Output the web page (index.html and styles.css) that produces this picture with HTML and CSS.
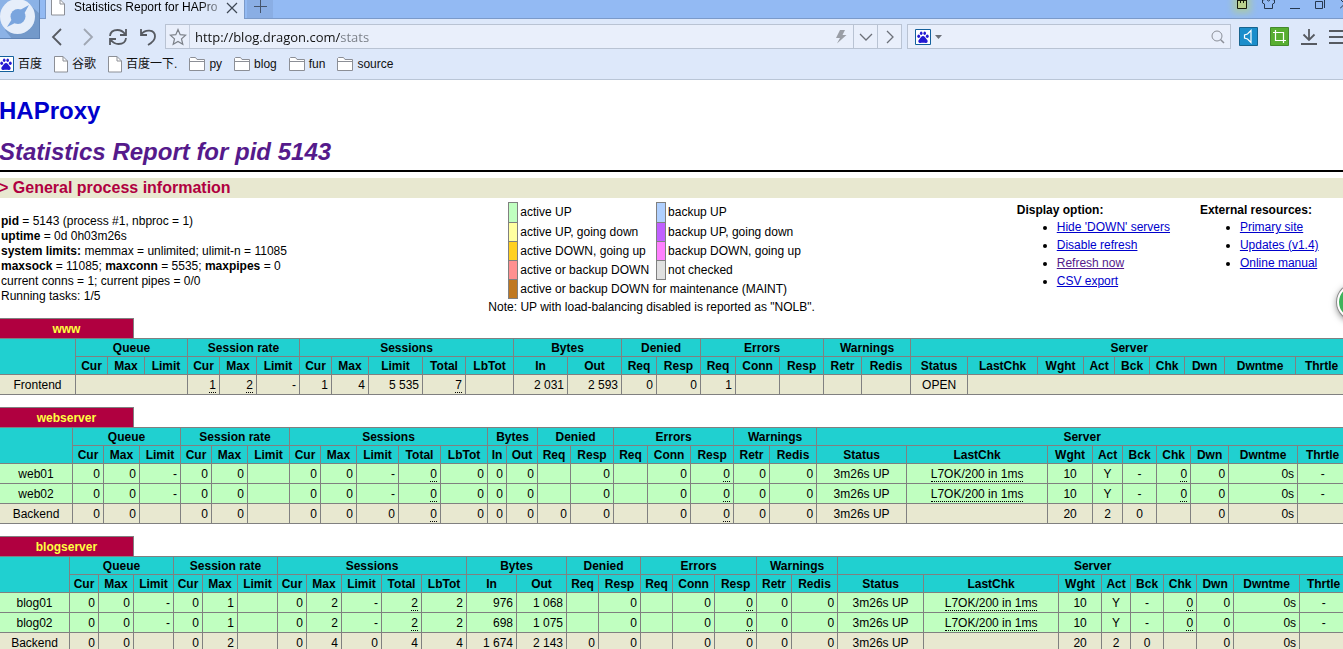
FILE: index.html
```html
<!DOCTYPE html>
<html lang="en">
<head>
<meta charset="utf-8">
<title>Statistics Report for HAProxy</title>
<link rel="stylesheet" href="styles.css">
</head>
<body>
<svg class="defs" aria-hidden="true">
  <symbol id="page" viewBox="0 0 14 17"><path d="M.5.5H9L13.5 5V16H.5Z" fill="#fff" stroke="#8c8f96"/><path d="M9 .5V5h4.5" fill="none" stroke="#8c8f96"/></symbol>
  <symbol id="folder" viewBox="0 0 16 14"><path d="M.5 13.500V1.500L1.500.5H6.500L8 2.500H15.500V13.500Z" fill="#fff" stroke="#8c8f96"/><path d="M1 4.500H15" stroke="#8c8f96"/></symbol>
  <symbol id="paw" viewBox="0 0 16 16"><path d="M.5.5h15v15H.5z" fill="#fff" stroke="#13609c"/><g fill="#2419d2"><ellipse cx="3.700" cy="7.200" rx="1.400" ry="1.800"/><ellipse cx="6.200" cy="4.300" rx="1.300" ry="1.800"/><ellipse cx="9.700" cy="4.300" rx="1.300" ry="1.800"/><ellipse cx="12.300" cy="7.200" rx="1.400" ry="1.800"/><path d="M8 7c1.600 0 2.200 1.700 3.200 2.700 1.300 1.300 1.800 2 1.300 3.200-.7 1.600-2.500.8-4.500.8s-3.800.8-4.500-.8c-.5-1.200 0-1.900 1.300-3.200C5.800 8.700 6.400 7 8 7z"/></g></symbol>
</svg>
<div class="window">
  <header class="browser">
    <button class="logo" aria-label="Browser menu"><svg width="40" height="39" viewBox="0 0 40 39"><path d="M0 0H40V39H0Z" fill="#8bb2e6"/><path d="M31 6L40 14V39H12L5 30Z" fill="#7399ca"/><circle cx="17.500" cy="16.500" r="17.500" fill="#e6eefa"/><circle cx="18" cy="16.500" r="7.500" fill="#7aa5de"/><path d="M7 27L12 19L15 23ZM29 5L24 14L20 10Z" fill="#7aa5de"/><path d="M0 38.500H39.500V0" fill="none" stroke="#5f83b5"/></svg></button>
    <div class="titlebar">
      <div class="tab"><svg width="14" height="17"><use href="#page"/></svg><span class="tab-title">Statistics Report for HAPro</span><button aria-label="Close tab"><svg width="12" height="12" viewBox="0 0 12 12"><path d="M1 1L11 11M11 1L1 11" stroke="#3e4754" stroke-width="1.200"/></svg></button></div>
      <button class="new-tab" aria-label="New tab"><svg width="13" height="13" viewBox="0 0 13 13"><path d="M6.500 0V13M0 6.500H13" stroke="#45546b"/></svg></button>
      <div class="window-buttons">
        <button class="glow" aria-label="Notes"><svg width="10" height="10" viewBox="0 0 10 10"><path d="M.5 0V9.500H9.500V0M0 1.500H10M3.500 1V4M6.500 1V4" fill="none" stroke="#15180c"/></svg></button>
        <button aria-label="Skins"><svg width="13" height="10" viewBox="0 0 13 10"><path d="M2.500 9.500V5L.5 4V1L3 .5L4.500 0Q6.500 4 8.500 0L10 .5L12.500 1V4L10.500 5V9.500Z" fill="none" stroke="#26384f"/></svg></button>
        <button aria-label="Minimize"><svg width="10" height="10" viewBox="0 0 10 10"><path d="M0 9.500H10" stroke="#26384f"/></svg></button>
        <button aria-label="Restore"><svg width="10" height="10" viewBox="0 0 10 10"><path d="M.5 2.500H7.500V9.500H.5ZM2 .5H9.500V9" fill="none" stroke="#26384f"/></svg></button>
        <button aria-label="Close"><svg width="10" height="10" viewBox="0 0 10 10"><path d="M0 9.500L9.500 0M0 0L9.500 9.500" stroke="#26384f"/></svg></button>
      </div>
    </div>
    <nav class="toolbar">
      <div class="nav-buttons">
        <button aria-label="Back"><svg width="20" height="20" viewBox="0 0 20 20"><path d="M13 2L5 10L13 18" fill="none" stroke="#565a61" stroke-width="1.800"/></svg></button>
        <button aria-label="Forward"><svg width="20" height="20" viewBox="0 0 20 20"><path d="M6 2L14 10L6 18" fill="none" stroke="#a0a7b3" stroke-width="1.800"/></svg></button>
        <button aria-label="Reload"><svg width="20" height="20" viewBox="0 0 20 20"><path d="M2 9Q2.500 3 9.500 3Q14 3 17 7M18 2V8H12M18 11Q17.500 17 10.500 17Q6 17 3 13M2 18V12H8" fill="none" stroke="#565a61" stroke-width="1.800"/></svg></button>
        <button aria-label="Undo"><svg width="20" height="20" viewBox="0 0 20 20"><path d="M3 2V8H9M3 7.500C7 2 17 2 17 9.500Q17 14 10 18" fill="none" stroke="#565a61" stroke-width="1.800"/></svg></button>
      </div>
      <div class="address">
        <button class="star" aria-label="Bookmark"><svg width="18" height="18" viewBox="0 0 18 18"><path d="M9 1.500L11.200 6.700L16.700 7.200L12.500 10.900L13.800 16.300L9 13.400L4.200 16.300L5.500 10.900L1.300 7.200L6.800 6.700Z" fill="none" stroke="#7b8088" stroke-width="1.200"/></svg></button>
        <input class="url" type="text" aria-label="Address" value="http://blog.dragon.com/stats">
        <button class="bolt" aria-label="Speed mode"><svg width="12" height="14" viewBox="0 0 12 14"><path d="M5 0H10L7.500 5H11.500L2 13.500L5 8H1Z" fill="#9a9ea6"/></svg></button>
        <button class="cell" aria-label="History"><svg width="14" height="10" viewBox="0 0 14 10"><path d="M1 2L7 8L13 2" fill="none" stroke="#6c7078" stroke-width="1.300"/></svg></button>
        <button class="cell" aria-label="Go"><svg width="10" height="14" viewBox="0 0 10 14"><path d="M2 1L8 7L2 13" fill="none" stroke="#6c7078" stroke-width="1.300"/></svg></button>
      </div>
      <div class="search">
        <button aria-label="Search engine"><svg width="16" height="16"><use href="#paw"/></svg><svg width="7" height="4" viewBox="0 0 7 4"><path d="M0 0H7L3.500 4Z" fill="#6c7078"/></svg></button>
        <input type="search" aria-label="Search">
        <button aria-label="Search"><svg width="14" height="14" viewBox="0 0 14 14"><circle cx="6" cy="6" r="5" fill="none" stroke="#8b8f98"/><path d="M9.500 9.500L13 13" stroke="#8b8f98" stroke-width="1.500"/></svg></button>
      </div>
      <div class="tools">
        <button aria-label="Sound"><svg width="19" height="19" viewBox="0 0 19 19"><path d="M.5.5h18v18H.5z" fill="#1b8ecb" stroke="#17648f"/><path d="M12 3.500V15.500L8.500 12L5.500 11V8L8.500 7Z" fill="none" stroke="#fff" stroke-width="1.200"/></svg></button>
        <button aria-label="Capture"><svg width="19" height="19" viewBox="0 0 19 19"><path d="M.5.5h18v18H.5z" fill="#58ae31" stroke="#438a2b"/><path d="M5.500 3V13.500H16M3 5.500H13.500V16" fill="none" stroke="#fff" stroke-width="1.200"/></svg></button>
        <button aria-label="Downloads"><svg width="16" height="16" viewBox="0 0 16 16"><path d="M8 0V11M2.500 5.500L8 11L13.500 5.500M0 15H16" fill="none" stroke="#565a61" stroke-width="1.800"/></svg></button>
        <button aria-label="Menu"><svg width="16" height="16" viewBox="0 0 16 16"><path d="M0 2H16M0 8H16M0 14H16" stroke="#565a61" stroke-width="1.800"/></svg></button>
      </div>
    </nav>
    <nav class="bookmarks">
      <a href="#"><svg width="16" height="16"><use href="#paw"/></svg>百度</a>
      <a href="#"><svg width="14" height="17"><use href="#page"/></svg>谷歌</a>
      <a href="#"><svg width="14" height="17"><use href="#page"/></svg>百度一下.</a>
      <a href="#"><svg width="16" height="14"><use href="#folder"/></svg>py</a>
      <a href="#"><svg width="16" height="14"><use href="#folder"/></svg>blog</a>
      <a href="#"><svg width="16" height="14"><use href="#folder"/></svg>fun</a>
      <a href="#"><svg width="16" height="14"><use href="#folder"/></svg>source</a>
    </nav>
  </header>
  <main class="viewport">
    <div class="report">
      <h1><a href="#">HAProxy</a></h1>
      <h2><a href="#">Statistics Report for pid 5143</a></h2>
      <hr>
      <h3>&gt; General process information</h3>
      <section class="info">
        <p class="process"><b>pid</b> = 5143 (process #1, nbproc = 1)<br>
          <b>uptime</b> = 0d 0h03m26s<br>
          <b>system limits:</b> memmax = unlimited; ulimit-n = 11085<br>
          <b>maxsock</b> = 11085; <b>maxconn</b> = 5535; <b>maxpipes</b> = 0<br>
          current conns = 1; current pipes = 0/0<br>
          Running tasks: 1/5</p>
        <div class="legend">
          <table>
            <tr><td class="key up"></td><td>active UP</td><td class="key backup-up"></td><td>backup UP</td></tr>
            <tr><td class="key going-down"></td><td>active UP, going down</td><td class="key backup-going-down"></td><td>backup UP, going down</td></tr>
            <tr><td class="key going-up"></td><td>active DOWN, going up</td><td class="key backup-going-up"></td><td>backup DOWN, going up</td></tr>
            <tr><td class="key down"></td><td>active or backup DOWN</td><td class="key unchecked"></td><td>not checked</td></tr>
            <tr><td class="key maint"></td><td colspan="3">active or backup DOWN for maintenance (MAINT)</td></tr>
          </table>
          <p>Note: UP with load-balancing disabled is reported as "NOLB".</p>
        </div>
        <div class="links"><b>Display option:</b>
          <ul><li><a href="#">Hide 'DOWN' servers</a></li><li><a href="#">Disable refresh</a></li><li><a class="visited" href="#">Refresh now</a></li><li><a href="#">CSV export</a></li></ul>
        </div>
        <div class="links"><b>External resources:</b>
          <ul><li><a href="#">Primary site</a></li><li><a href="#">Updates (v1.4)</a></li><li><a href="#">Online manual</a></li></ul>
        </div>
      </section>

      <section class="proxy www">
        <h4>www</h4>
        <table>
          <colgroup><col><col><col><col><col><col><col><col><col><col><col><col><col><col><col><col><col><col><col><col><col><col><col><col><col><col><col><col><col><col></colgroup>
          <thead>
            <tr><th rowspan="2"></th><th colspan="3">Queue</th><th colspan="3">Session rate</th><th colspan="5">Sessions</th><th colspan="2">Bytes</th><th colspan="2">Denied</th><th colspan="3">Errors</th><th colspan="2">Warnings</th><th colspan="9">Server</th></tr>
            <tr><th>Cur</th><th>Max</th><th>Limit</th><th>Cur</th><th>Max</th><th>Limit</th><th>Cur</th><th>Max</th><th>Limit</th><th>Total</th><th>LbTot</th><th>In</th><th>Out</th><th>Req</th><th>Resp</th><th>Req</th><th>Conn</th><th>Resp</th><th>Retr</th><th>Redis</th><th>Status</th><th>LastChk</th><th>Wght</th><th>Act</th><th>Bck</th><th>Chk</th><th>Dwn</th><th>Dwntme</th><th>Thrtle</th></tr>
          </thead>
          <tbody>
            <tr class="total"><td class="mid">Frontend</td><td colspan="3"></td><td><u>1</u></td><td><u>2</u></td><td>-</td><td>1</td><td>4</td><td>5 535</td><td><u>7</u></td><td></td><td>2 031</td><td>2 593</td><td>0</td><td>0</td><td>1</td><td></td><td></td><td></td><td></td><td class="mid">OPEN</td><td colspan="8"></td></tr>
          </tbody>
        </table>
      </section>

      <section class="proxy webserver">
        <h4>webserver</h4>
        <table>
          <colgroup><col><col><col><col><col><col><col><col><col><col><col><col><col><col><col><col><col><col><col><col><col><col><col><col><col><col><col><col><col><col></colgroup>
          <thead>
            <tr><th rowspan="2"></th><th colspan="3">Queue</th><th colspan="3">Session rate</th><th colspan="5">Sessions</th><th colspan="2">Bytes</th><th colspan="2">Denied</th><th colspan="3">Errors</th><th colspan="2">Warnings</th><th colspan="9">Server</th></tr>
            <tr><th>Cur</th><th>Max</th><th>Limit</th><th>Cur</th><th>Max</th><th>Limit</th><th>Cur</th><th>Max</th><th>Limit</th><th>Total</th><th>LbTot</th><th>In</th><th>Out</th><th>Req</th><th>Resp</th><th>Req</th><th>Conn</th><th>Resp</th><th>Retr</th><th>Redis</th><th>Status</th><th>LastChk</th><th>Wght</th><th>Act</th><th>Bck</th><th>Chk</th><th>Dwn</th><th>Dwntme</th><th>Thrtle</th></tr>
          </thead>
          <tbody>
            <tr class="active"><td class="mid">web01</td><td>0</td><td>0</td><td>-</td><td>0</td><td>0</td><td></td><td>0</td><td>0</td><td>-</td><td><u>0</u></td><td>0</td><td>0</td><td>0</td><td></td><td>0</td><td></td><td>0</td><td><u>0</u></td><td>0</td><td>0</td><td class="mid">3m26s UP</td><td class="mid"><u>L7OK/200 in 1ms</u></td><td class="mid">10</td><td class="mid">Y</td><td class="mid">-</td><td><u>0</u></td><td>0</td><td>0s</td><td class="mid">-</td></tr>
            <tr class="active"><td class="mid">web02</td><td>0</td><td>0</td><td>-</td><td>0</td><td>0</td><td></td><td>0</td><td>0</td><td>-</td><td><u>0</u></td><td>0</td><td>0</td><td>0</td><td></td><td>0</td><td></td><td>0</td><td><u>0</u></td><td>0</td><td>0</td><td class="mid">3m26s UP</td><td class="mid"><u>L7OK/200 in 1ms</u></td><td class="mid">10</td><td class="mid">Y</td><td class="mid">-</td><td><u>0</u></td><td>0</td><td>0s</td><td class="mid">-</td></tr>
            <tr class="total"><td class="mid">Backend</td><td>0</td><td>0</td><td></td><td>0</td><td>0</td><td></td><td>0</td><td>0</td><td>0</td><td><u>0</u></td><td>0</td><td>0</td><td>0</td><td>0</td><td>0</td><td></td><td>0</td><td><u>0</u></td><td>0</td><td>0</td><td class="mid">3m26s UP</td><td></td><td class="mid">20</td><td class="mid">2</td><td class="mid">0</td><td></td><td>0</td><td>0s</td><td></td></tr>
          </tbody>
        </table>
      </section>

      <section class="proxy blogserver">
        <h4>blogserver</h4>
        <table>
          <colgroup><col><col><col><col><col><col><col><col><col><col><col><col><col><col><col><col><col><col><col><col><col><col><col><col><col><col><col><col><col><col></colgroup>
          <thead>
            <tr><th rowspan="2"></th><th colspan="3">Queue</th><th colspan="3">Session rate</th><th colspan="5">Sessions</th><th colspan="2">Bytes</th><th colspan="2">Denied</th><th colspan="3">Errors</th><th colspan="2">Warnings</th><th colspan="9">Server</th></tr>
            <tr><th>Cur</th><th>Max</th><th>Limit</th><th>Cur</th><th>Max</th><th>Limit</th><th>Cur</th><th>Max</th><th>Limit</th><th>Total</th><th>LbTot</th><th>In</th><th>Out</th><th>Req</th><th>Resp</th><th>Req</th><th>Conn</th><th>Resp</th><th>Retr</th><th>Redis</th><th>Status</th><th>LastChk</th><th>Wght</th><th>Act</th><th>Bck</th><th>Chk</th><th>Dwn</th><th>Dwntme</th><th>Thrtle</th></tr>
          </thead>
          <tbody>
            <tr class="active"><td class="mid">blog01</td><td>0</td><td>0</td><td>-</td><td>0</td><td>1</td><td></td><td>0</td><td>2</td><td>-</td><td><u>2</u></td><td>2</td><td>976</td><td>1 068</td><td></td><td>0</td><td></td><td>0</td><td><u>0</u></td><td>0</td><td>0</td><td class="mid">3m26s UP</td><td class="mid"><u>L7OK/200 in 1ms</u></td><td class="mid">10</td><td class="mid">Y</td><td class="mid">-</td><td><u>0</u></td><td>0</td><td>0s</td><td class="mid">-</td></tr>
            <tr class="active"><td class="mid">blog02</td><td>0</td><td>0</td><td>-</td><td>0</td><td>1</td><td></td><td>0</td><td>2</td><td>-</td><td><u>2</u></td><td>2</td><td>698</td><td>1 075</td><td></td><td>0</td><td></td><td>0</td><td><u>0</u></td><td>0</td><td>0</td><td class="mid">3m26s UP</td><td class="mid"><u>L7OK/200 in 1ms</u></td><td class="mid">10</td><td class="mid">Y</td><td class="mid">-</td><td><u>0</u></td><td>0</td><td>0s</td><td class="mid">-</td></tr>
            <tr class="total"><td class="mid">Backend</td><td>0</td><td>0</td><td></td><td>0</td><td>2</td><td></td><td>0</td><td>4</td><td>0</td><td><u>4</u></td><td>4</td><td>1 674</td><td>2 143</td><td>0</td><td>0</td><td></td><td>0</td><td><u>0</u></td><td>0</td><td>0</td><td class="mid">3m26s UP</td><td></td><td class="mid">20</td><td class="mid">2</td><td class="mid">0</td><td></td><td>0</td><td>0s</td><td></td></tr>
          </tbody>
        </table>
      </section>
    </div>
  </main>
  <button class="bubble" aria-label="Assistant"></button>
</div>
</body>
</html>
```
FILE: styles.css
```css
* { box-sizing: border-box; }
body { margin: 0; font: 12px/15px "Liberation Sans", Arial, "Noto Sans CJK SC", sans-serif; color: #000; background: #fff; }
button { display: flex; align-items: center; justify-content: center; flex: none; margin: 0; padding: 0; border: 0; background: none; }
svg { display: block; flex: none; }
.defs { position: absolute; width: 0; height: 0; }
.window { position: relative; display: flex; flex-direction: column; height: 100vh; overflow: hidden; }

/* Browser frame */
.browser { position: relative; flex: none; background: #dde8fa; border-bottom: 1px solid #b9c5d6; }
.logo { position: absolute; left: 0; top: 0; }
.titlebar { display: flex; align-items: flex-start; height: 19px; padding-left: 45px; background: #93baf3; border-bottom: 1px solid #7b9ac9; }
.tab { display: flex; align-items: center; flex: none; width: 200px; height: 19px; padding: 0 6px 4px 5px; background: #dde8fa; border: solid #7b9ac9; border-width: 0 1px; }
.tab-title { flex: 1; margin: 0 5px 0 9px; white-space: nowrap; mask-image: linear-gradient(to right, #000 85%, #0004); }
.new-tab { width: 26px; height: 18px; padding-bottom: 5px; margin-left: 2px; background: #8aaee4; }
.window-buttons { display: flex; gap: 15px; margin: -1px -7px 0 auto; }
.glow { background: #b9cf8c; box-shadow: 0 0 7px 4px #a9c9a8; }
.toolbar { display: flex; align-items: center; height: 35px; padding: 0 0 0 48px; }
.nav-buttons { display: flex; gap: 10px; margin-right: 7px; }
.address, .search { display: flex; align-items: stretch; height: 25px; background: #e9effb; border: 1px solid #b9c3d3; }
.address { flex: 1; }
.search { flex: none; width: 25%; margin-left: 5px; padding: 0 5px 0 7px; }
.search button { gap: 4px; }
input { flex: 1; min-width: 0; padding: 0; border: 0; outline: 0; background: none; }
.star { width: 24px; border-right: 1px solid #c5cede; }
.url { margin: 0 5px; font: 13px "Open Sans", "Noto Sans", sans-serif; color: transparent; background: linear-gradient(to right, #111 145px, #777c84 145px); background-clip: text; }
.bolt { width: 24px; }
.cell { width: 24px; border-left: 1px solid #b9c3d3; }
.tools { display: flex; align-items: center; gap: 12px; margin: 0 -2px 0 8px; }
.bookmarks { display: flex; align-items: center; gap: 12px; height: 25px; margin-left: -2px; padding-bottom: 5px; }
.bookmarks a { display: flex; align-items: center; gap: 4px; color: #111; text-decoration: none; }

/* Statistics report */
.viewport { flex: 1; min-height: 0; overflow: hidden; }
.report { margin: 0 -5px 0 -1px; padding-top: 16px; }
h1, h2, h3, h4, p { margin: 0; }
h1, h2 { font-size: 24px; line-height: 30px; }
h2 { margin-top: 11px; font-style: italic; }
h1 a { color: #00c; text-decoration: none; }
h2 a { color: #551a8b; text-decoration: none; }
hr { height: 2px; margin: 3px 0 6px; border: 0; background: #000; }
h3 { font-size: 16px; line-height: 20px; color: #b00040; background: #e8e8d0; }
.info { display: grid; grid-template-columns: 489fr 528fr 183fr 148fr; height: 120px; padding-top: 4px; }
.process { padding: 12px 0 0 2px; }
.legend { justify-self: start; }
.legend table { margin: 0 0 1px 20px; border-collapse: collapse; }
.legend td { height: 19px; padding: 1px 7px 1px 2px; white-space: nowrap; }
.legend tr:first-child td { height: 20px; }
.legend .key { width: 9px; padding: 0; border: 1px solid gray; }
.up { background: #c0ffc0; }
.going-down { background: #ffffa0; }
.going-up { background: #ffd020; }
.down { background: #ff9090; }
.maint { background: #c07820; }
.backup-up { background: #b0d0ff; }
.backup-going-down { background: #c060ff; }
.backup-going-up { background: #ff80ff; }
.unchecked { background: #e0e0e0; }
.links { line-height: 18px; white-space: nowrap; }
.links b { display: block; line-height: 16px; }
.links ul { margin: 0; padding-left: 40px; }
.links a { color: #00c; }
.links .visited { color: #551a8b; }
.proxy { margin-bottom: 12px; }
.proxy h4 { width: 10%; padding: 3px 0 1px; font-size: 12px; text-align: center; color: #ffff40; background: #b00040; border: solid gray; border-width: 1px 1px 0; }
.proxy table { width: 100%; table-layout: fixed; border-collapse: collapse; }
.proxy th, .proxy td { border: 1px solid gray; white-space: nowrap; }
.proxy th { padding: 2px 0 0; background: #20d0d0; }
.proxy td { padding: 3px 3px 1px; text-align: right; }
.proxy .mid { padding: 3px 0 1px; text-align: center; }
.total { background: #e8e8d0; }
.active { background: #c0ffc0; }
u { text-decoration: none; border-bottom: 1px dotted #000; }

.www col:nth-child(1) { width: 76px; }
.www col:is(:nth-child(2), :nth-child(5), :nth-child(8)) { width: 32px; }
.www col:is(:nth-child(3), :nth-child(6), :nth-child(9)) { width: 37px; }
.www col:is(:nth-child(4), :nth-child(7), :nth-child(11)) { width: 43px; }
.www col:is(:nth-child(10), :nth-child(13), :nth-child(14)) { width: 54px; }
.www col:nth-child(12) { width: 48px; }
.www col:is(:nth-child(15), :nth-child(17), :nth-child(26), :nth-child(27)) { width: 35px; }
.www col:is(:nth-child(16), :nth-child(18), :nth-child(19)) { width: 44px; }
.www col:nth-child(20) { width: 38px; }
.www col:nth-child(21) { width: 49px; }
.www col:nth-child(22) { width: 57px; }
.www col:nth-child(23) { width: 70px; }
.www col:nth-child(24) { width: 46px; }
.www col:nth-child(25) { width: 31px; }
.www col:nth-child(28) { width: 40px; }
.www col:nth-child(29) { width: 71px; }
.www col:nth-child(30) { width: 52px; }

.webserver col:nth-child(1) { width: 73px; }
.webserver col:is(:nth-child(2), :nth-child(5), :nth-child(8), :nth-child(14)) { width: 31px; }
.webserver col:is(:nth-child(3), :nth-child(6), :nth-child(9), :nth-child(20)) { width: 36px; }
.webserver col:nth-child(4) { width: 41px; }
.webserver col:is(:nth-child(7), :nth-child(10), :nth-child(11)) { width: 42px; }
.webserver col:is(:nth-child(12), :nth-child(21)) { width: 47px; }
.webserver col:nth-child(13) { width: 19px; }
.webserver col:nth-child(15) { width: 33px; }
.webserver col:is(:nth-child(17), :nth-child(26), :nth-child(27)) { width: 34px; }
.webserver col:is(:nth-child(16), :nth-child(18), :nth-child(19)) { width: 43px; }
.webserver col:nth-child(22) { width: 90px; }
.webserver col:nth-child(23) { width: 141px; }
.webserver col:nth-child(24) { width: 45px; }
.webserver col:nth-child(25) { width: 30px; }
.webserver col:nth-child(28) { width: 38px; }
.webserver col:nth-child(29) { width: 69px; }
.webserver col:nth-child(30) { width: 50px; }

.blogserver col:nth-child(1) { width: 70px; }
.blogserver col:is(:nth-child(2), :nth-child(5), :nth-child(8), :nth-child(25)) { width: 29px; }
.blogserver col:is(:nth-child(3), :nth-child(6), :nth-child(9), :nth-child(20)) { width: 35px; }
.blogserver col:is(:nth-child(4), :nth-child(7), :nth-child(10), :nth-child(11)) { width: 40px; }
.blogserver col:nth-child(12) { width: 45px; }
.blogserver col:is(:nth-child(13), :nth-child(14)) { width: 50px; }
.blogserver col:is(:nth-child(15), :nth-child(17)) { width: 32px; }
.blogserver col:is(:nth-child(26), :nth-child(27)) { width: 33px; }
.blogserver col:is(:nth-child(16), :nth-child(18), :nth-child(19)) { width: 42px; }
.blogserver col:nth-child(21) { width: 46px; }
.blogserver col:nth-child(22) { width: 86px; }
.blogserver col:nth-child(23) { width: 135px; }
.blogserver col:nth-child(24) { width: 43px; }
.blogserver col:nth-child(28) { width: 37px; }
.blogserver col:nth-child(29) { width: 66px; }
.blogserver col:nth-child(30) { width: 48px; }

.bubble { position: absolute; right: -30px; top: 284px; width: 36px; height: 36px; border: 2px solid #fff; border-radius: 50%; background: #3fb35c; box-shadow: 0 0 0 1px #8a8a8a, 0 2px 7px #777; }
```
